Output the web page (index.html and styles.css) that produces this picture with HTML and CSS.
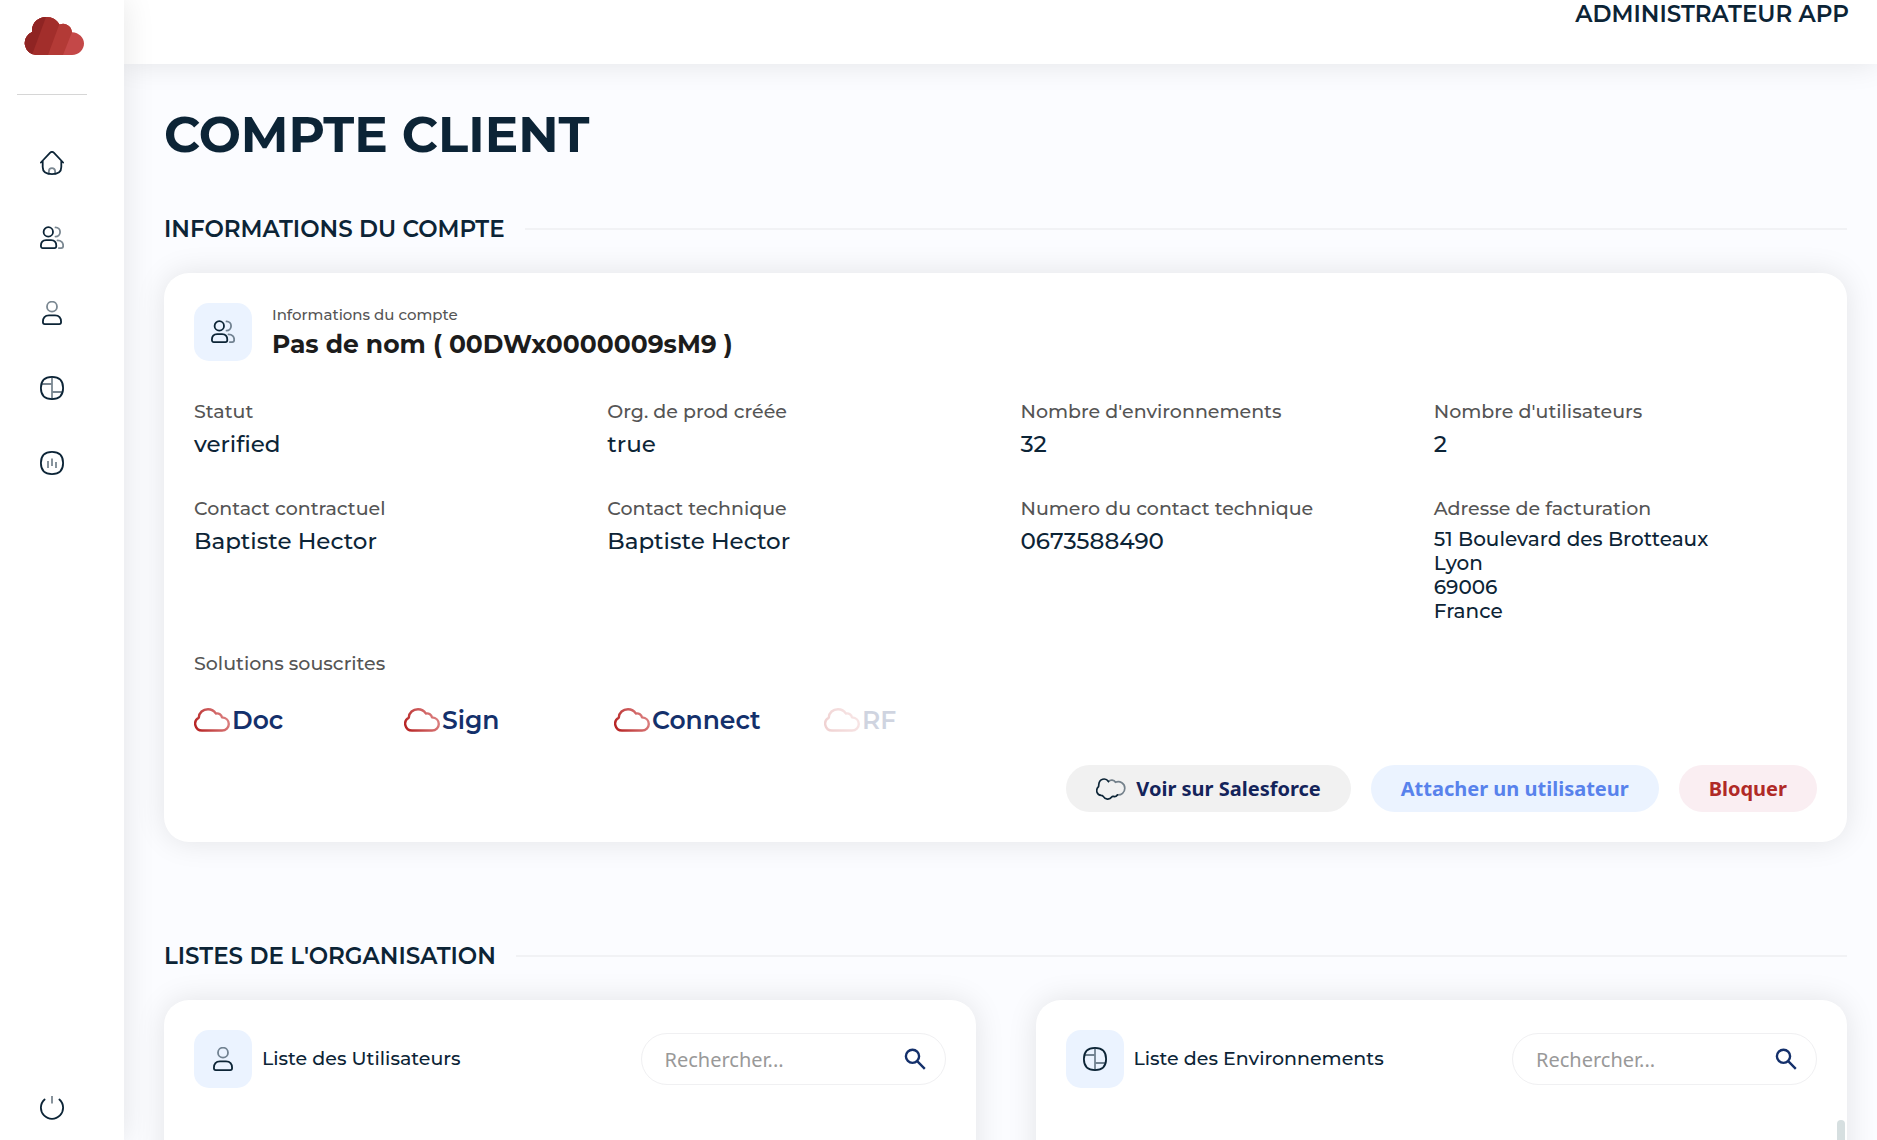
FILE: index.html
```html
<!DOCTYPE html>
<html lang="fr">
<head>
<meta charset="utf-8">
<meta name="viewport" content="width=device-width, initial-scale=1">
<title>Compte client</title>
<link rel="stylesheet" href="styles.css">
</head>
<body>
<svg class="defs" aria-hidden="true">
  <defs>
    <linearGradient id="cloud-stroke" x1="0" y1="1" x2="1" y2="0.7">
      <stop offset="0" stop-color="#b51f1f"/><stop offset="1" stop-color="#d97b7b"/>
    </linearGradient>
    <clipPath id="cloud-clip">
      <path d="M12 38a12 12 0 0 1-4-23C7.500 6 14 0 22.500 0c6 0 10.500 3 13 7.500C41.500 5 47.500 9 48 15.200 55 15.500 60 20.500 60 26.500S55 38 48 38z"/>
    </clipPath>
  </defs>
  <symbol id="users" viewBox="0 0 24 24">
    <g fill="none" stroke="currentColor" stroke-width="1.800" stroke-linecap="round">
      <circle cx="8.300" cy="5.900" r="4.700"/>
      <path d="M.9 19.800c0-3.700 2.300-5.700 5.200-5.700h5c2.900 0 5.200 2 5.200 5.700 0 1.500-.7 2.400-1.900 2.400H2.800C1.600 22.200.9 21.300.9 19.800z"/>
      <path opacity=".55" d="M15.500 1.400a4.600 4.600 0 0 1 0 9.200M17.500 14.400c3.600 0 5.700 2.400 5.700 5.400 0 1.500-.7 2.300-1.900 2.300h-2.500"/>
    </g>
  </symbol>
  <symbol id="user" viewBox="0 0 24 24">
    <g fill="none" stroke="currentColor" stroke-width="1.800">
      <circle opacity=".55" cx="12" cy="5.700" r="5"/>
      <path d="M2.900 21c0-4.500 2.600-6.700 6.100-6.700h6c3.500 0 6.100 2.200 6.100 6.700 0 1.400-.7 2.100-1.900 2.100H4.800c-1.200 0-1.900-.7-1.900-2.100z"/>
    </g>
  </symbol>
  <symbol id="layout" viewBox="0 0 24 24">
    <g fill="none" stroke="currentColor" stroke-width="1.800">
      <path opacity=".55" d="M12 1v22M1.500 8H12M12 16h10.500"/>
      <path d="M12 .9C19.400.9 23.100 4.600 23.100 12S19.400 23.100 12 23.100.9 19.400.9 12 4.600.9 12 .9z"/>
    </g>
  </symbol>
  <symbol id="cloud" viewBox="0 0 36 24">
    <path fill="none" stroke="url(#cloud-stroke)" stroke-width="2.400" stroke-linejoin="round" d="M8 22.500a6.800 6.800 0 0 1-3.200-12.800C5 4.500 9 1.200 14 1.200c3.500 0 6.300 1.700 7.800 4.300 3.200-.6 5.700 1.200 6.200 3.900 4.200.3 6.800 3.100 6.800 6.600 0 3.700-2.900 6.500-6.800 6.500z"/>
  </symbol>
  <symbol id="search" viewBox="0 0 24 24">
    <path fill="none" stroke="currentColor" stroke-width="2.400" d="M9.500 2.700a6.600 6.600 0 1 1 0 13.200A6.600 6.600 0 0 1 9.500 2.700zM14.200 14.200l7.600 7.600"/>
  </symbol>
</svg>

<div class="app">
  <aside class="sidebar">
    <a class="brand" href="#" aria-label="Accueil">
      <svg width="60" height="38" viewBox="0 0 60 38"><g clip-path="url(#cloud-clip)">
        <path fill="#c44848" d="M0 0h60v38H0z"/><path fill="#b33a36" d="M0 0h54L39 38H0z"/>
        <path fill="#a22e2b" d="M0 0h38L24 38H0z"/><path fill="#8f2423" d="M0 0h22L8 38H0z"/>
      </g></svg>
    </a>
    <hr class="sidebar-rule">
    <nav class="nav">
      <a href="#" aria-label="Tableau de bord"><svg class="icon" viewBox="0 0 24 24"><g fill="none" stroke="currentColor" stroke-width="1.800" stroke-linecap="round" stroke-linejoin="round"><path opacity=".55" d="M8.900 23v-2.800a3.100 3.100 0 0 1 6.200 0V23"/><path d="M.9 11.500 10.200 1.700q1.800-1.600 3.600 0l9.300 9.800M2.700 10v6c0 4.800 2.800 7.100 9.300 7.100s9.300-2.300 9.300-7.100v-6"/></g></svg></a>
      <a href="#" aria-label="Comptes"><svg class="icon"><use href="#users"/></svg></a>
      <a href="#" aria-label="Utilisateurs"><svg class="icon"><use href="#user"/></svg></a>
      <a href="#" aria-label="Environnements"><svg class="icon"><use href="#layout"/></svg></a>
      <a href="#" aria-label="Statistiques"><svg class="icon" viewBox="0 0 24 24"><g fill="none" stroke="currentColor" stroke-width="1.800"><path opacity=".55" d="M8 10v7M12 7.500V15M16 11v6"/><path d="M12 .9C19.400.9 23.100 4.600 23.100 12S19.400 23.100 12 23.100.9 19.400.9 12 4.600.9 12 .9z"/></g></svg></a>
    </nav>
    <button class="power" type="button" aria-label="Se déconnecter"><svg class="icon" viewBox="0 0 24 24"><g fill="none" stroke="currentColor" stroke-width="1.800"><path opacity=".55" d="M12 0v7.500"/><path stroke-linecap="round" d="M4.600 3.500a11.100 11.100 0 1 0 14.800 0"/></g></svg></button>
  </aside>

  <div class="page">
    <header class="topbar"><span class="account">ADMINISTRATEUR APP</span></header>
    <main class="content">
      <h1>COMPTE CLIENT</h1>

      <section class="section">
        <h2 class="section-title">INFORMATIONS DU COMPTE</h2>
        <article class="card">
          <header class="card-head">
            <span class="badge"><svg class="icon"><use href="#users"/></svg></span>
            <div>
              <p class="overline">Informations du compte</p>
              <h3 class="name">Pas de nom ( 00DWx0000009sM9 )</h3>
            </div>
          </header>
          <dl class="facts">
            <div><dt>Statut</dt><dd>verified</dd></div>
            <div><dt>Org. de prod créée</dt><dd>true</dd></div>
            <div><dt>Nombre d'environnements</dt><dd>32</dd></div>
            <div><dt>Nombre d'utilisateurs</dt><dd>2</dd></div>
            <div><dt>Contact contractuel</dt><dd>Baptiste Hector</dd></div>
            <div><dt>Contact technique</dt><dd>Baptiste Hector</dd></div>
            <div><dt>Numero du contact technique</dt><dd>0673588490</dd></div>
            <div><dt>Adresse de facturation</dt><dd class="address">51 Boulevard des Brotteaux<br>Lyon<br>69006<br>France</dd></div>
          </dl>
          <h4 class="label">Solutions souscrites</h4>
          <ul class="solutions">
            <li><svg class="cloud"><use href="#cloud"/></svg>Doc</li>
            <li><svg class="cloud"><use href="#cloud"/></svg>Sign</li>
            <li><svg class="cloud"><use href="#cloud"/></svg>Connect</li>
            <li class="inactive"><svg class="cloud"><use href="#cloud"/></svg>RF</li>
          </ul>
          <div class="actions">
            <button class="btn btn-neutral" type="button">
              <svg width="30" height="22" viewBox="0 0 30 22"><g fill="none" stroke="currentColor" stroke-width="1.700" stroke-linecap="round"><path d="M12.500 3.500C9.500-.8 3.300.8 2.800 6.300 2.700 7.500 2.700 8 2.500 8.700-.8 12 .8 17.200 5.300 17.300c1 0 1.300.3 1.700.9 2 3.500 6.700 3.800 8.700.8.500-.7 1-.8 1.800-.6 1.600.4 3-.2 3.900-1.500"/><path opacity=".55" d="M12.500 3.500c2-2.300 5.500-1.700 7 .7 4.500-1.700 9.300 1.300 9.300 6 0 4.300-3.500 7-7.400 6.700"/></g></svg>
              Voir sur Salesforce</button>
            <button class="btn btn-primary" type="button">Attacher un utilisateur</button>
            <button class="btn btn-danger" type="button">Bloquer</button>
          </div>
        </article>
      </section>

      <section class="section">
        <h2 class="section-title">LISTES DE L'ORGANISATION</h2>
        <div class="lists">
          <article class="card list-card">
            <header class="list-head">
              <span class="badge"><svg class="icon"><use href="#user"/></svg></span>
              <h3 class="list-title">Liste des Utilisateurs</h3>
              <label class="search"><input type="text" placeholder="Rechercher..." aria-label="Rechercher un utilisateur"><svg class="icon"><use href="#search"/></svg></label>
            </header>
          </article>
          <article class="card list-card">
            <header class="list-head">
              <span class="badge"><svg class="icon"><use href="#layout"/></svg></span>
              <h3 class="list-title">Liste des Environnements</h3>
              <label class="search"><input type="text" placeholder="Rechercher..." aria-label="Rechercher un environnement"><svg class="icon"><use href="#search"/></svg></label>
            </header>
            <div class="list-body"><span class="scroll-thumb"></span></div>
          </article>
        </div>
      </section>
    </main>
  </div>
</div>
</body>
</html>
```
FILE: styles.css
```css
* { box-sizing: border-box; }

body, h1, h2, h3, h4, p, dl, dd, ul { margin: 0; padding: 0; }

body {
  background: #fbfcff;
  color: #0c2436;
  font-family: Montserrat, Inter, sans-serif;
  font-size: 19px;
  font-weight: 500;
}

.defs { position: absolute; width: 0; height: 0; }
.icon { display: block; flex: none; width: 24px; height: 24px; }

.app { display: flex; height: 100vh; overflow: hidden; }

/* Sidebar */
.sidebar {
  display: flex;
  flex-direction: column;
  flex: none;
  align-items: center;
  width: 124px;
  padding: 17px 20px 20px 0;
  background: #fff;
  box-shadow: 0 0 30px rgba(0, 0, 0, 0.1);
  z-index: 2;
}
.brand { display: block; height: 38px; margin-left: 4px; }
.brand svg { display: block; }
.sidebar-rule { width: 70px; height: 1px; margin: 39px 0 56px; border: 0; background: #d6d6d6; }
.nav { display: flex; flex-direction: column; gap: 51px; }
.nav a { color: inherit; }
.power { margin-top: auto; padding: 0; border: 0; background: none; color: inherit; }

/* Page */
.page { display: flex; flex: 1; flex-direction: column; min-width: 0; }
.topbar {
  display: flex;
  flex: none;
  justify-content: flex-end;
  height: 64px;
  padding-right: 28px;
  background: #fff;
  box-shadow: 0 0 30px rgba(0, 0, 0, 0.1);
  z-index: 1;
}
.account { font-size: 23px; font-weight: 600; line-height: 28px; }
.content { flex: 1; padding: 40px 30px 0 40px; overflow: auto; scrollbar-width: none; }

h1 { font-size: 50px; font-weight: 700; line-height: 62px; }

.section { margin-top: 48px; }
.section + .section { margin-top: 99px; }
.section-title {
  display: flex;
  align-items: center;
  gap: 20px;
  margin-bottom: 29px;
  font-size: 23px;
  font-weight: 600;
  line-height: 30px;
}
.section-title::after { content: ""; flex: 1; height: 2px; background: #f1f2f5; }

.card {
  padding: 30px;
  border-radius: 25px;
  background: #fff;
  box-shadow: 0 0 30px rgba(0, 0, 0, 0.1);
}
.card-head { display: flex; align-items: center; gap: 20px; }
.badge {
  display: grid;
  flex: none;
  place-items: center;
  width: 58px;
  height: 58px;
  border-radius: 15px;
  background: #ebf3ff;
}
.overline { color: #555; font-size: 15px; line-height: 24px; }
.name { color: #1c1c1c; font-size: 25px; font-weight: 700; line-height: 34px; }

.facts {
  display: grid;
  grid-template-columns: repeat(4, 1fr);
  gap: 38px 30px;
  margin-top: 38px;
}
dt, .label { color: #555; font-size: 19px; font-weight: 500; line-height: 26px; }
dd { margin-top: 5px; font-size: 23px; line-height: 28px; }
.address { font-size: 20px; line-height: 24px; }

.label { margin-top: 28px; }
.solutions {
  display: flex;
  gap: 30px;
  margin-top: 27px;
  color: #14306b;
  font-size: 25px;
  font-weight: 600;
  line-height: 32px;
  list-style: none;
}
.solutions li { display: flex; align-items: center; gap: 2px; width: 180px; }
.cloud { flex: none; width: 36px; height: 24px; }
.inactive { opacity: 0.2; }

.actions { display: flex; justify-content: flex-end; gap: 20px; margin-top: 29px; }
.btn {
  display: flex;
  align-items: center;
  gap: 10px;
  height: 47px;
  padding: 0 30px;
  border: 0;
  border-radius: 24px;
  font: 700 20px "Noto Sans", sans-serif;
}
.btn-neutral { background: #f1f1f1; color: #14245a; }
.btn-neutral svg { color: #0c2436; }
.btn-primary { background: #ebf3ff; color: #5882ec; }
.btn-danger { background: #faeef2; color: #b02a27; }

/* Lists */
.lists { display: grid; grid-template-columns: 1fr 1fr; gap: 60px; }
.list-card { min-height: 420px; }
.list-head { display: flex; align-items: center; gap: 10px; }
.list-title { font-size: 19px; font-weight: 500; line-height: 28px; }
.search {
  display: flex;
  align-items: center;
  width: 305px;
  height: 52px;
  margin-left: auto;
  padding: 0 18px 0 23px;
  border: 1px solid #f0f0f2;
  border-radius: 26px;
  color: #14306b;
}
.search input {
  flex: 1;
  min-width: 0;
  padding: 0;
  border: 0;
  background: none;
  font: 400 20px "Noto Sans", sans-serif;
}
.search input::placeholder { color: #999; }
.list-body { display: flex; justify-content: flex-end; margin: 32px -28px 0 0; }
.scroll-thumb { width: 8px; height: 200px; border-radius: 4px; background: #d6dfe0; }
```
